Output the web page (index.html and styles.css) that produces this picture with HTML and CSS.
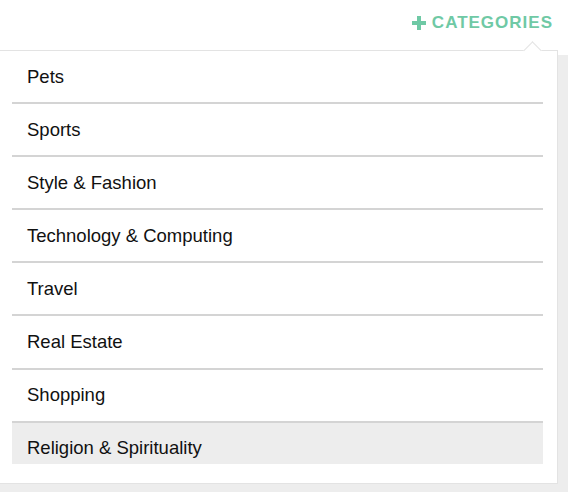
FILE: index.html
```html
<!DOCTYPE html>
<html>
<head>
<meta charset="utf-8">
<link rel="stylesheet" href="styles.css">
</head>
<body>
<div class="page">
  <header class="topbar">
    <button class="cat-btn">
      <svg class="plus" width="14" height="14" viewBox="0 0 14 14"><path d="M7 0v14M0 7h14" stroke="currentColor" stroke-width="4" fill="none"/></svg>
      <span>CATEGORIES</span>
    </button>
  </header>
  <main class="content"></main>
  <div class="dropdown">
    <span class="caret"></span>
    <ul class="list">
      <li class="item">Pets</li>
      <li class="item">Sports</li>
      <li class="item">Style &amp; Fashion</li>
      <li class="item">Technology &amp; Computing</li>
      <li class="item">Travel</li>
      <li class="item">Real Estate</li>
      <li class="item">Shopping</li>
      <li class="item active">Religion &amp; Spirituality</li>
    </ul>
  </div>
</div>
</body>
</html>
```

FILE: styles.css
```css
* { box-sizing: border-box; }
html, body { margin: 0; padding: 0; }
body {
  width: 568px;
  height: 492px;
  overflow: hidden;
  font-family: "Liberation Sans", Arial, Helvetica, sans-serif;
  background: #ffffff;
}
.page {
  position: relative;
  height: 492px;
  display: flex;
  flex-direction: column;
}
.topbar {
  height: 55px;
  display: flex;
  justify-content: flex-end;
  align-items: flex-start;
  padding: 13px 16px 0 0;
  background: #fff;
}
.cat-btn {
  display: flex;
  align-items: center;
  gap: 6px;
  border: 0;
  background: none;
  padding: 0;
  color: #6fc9a5;
  font-family: "Liberation Sans", Arial, sans-serif;
  font-weight: bold;
  font-size: 17px;
  line-height: 19px;
  letter-spacing: 1px;
}
.cat-btn span { margin-right: -1px; }
.plus { display: block; margin-top: 0; }
.content {
  flex: 1;
  background: #ededed;
}
.dropdown {
  position: absolute;
  top: 50px;
  left: -1px;
  width: 559px;
  background: #fff;
  border: 1px solid #e3e3e3;
  padding: 0 14px 19px 12px;
}
.caret {
  position: absolute;
  top: -7px;
  left: 526px;
  width: 13px;
  height: 13px;
  background: #fff;
  border-top: 1px solid #e3e3e3;
  border-left: 1px solid #e3e3e3;
  transform: rotate(45deg);
}
.list {
  list-style: none;
  margin: 0;
  padding: 0;
  height: 413px;
  overflow: hidden;
}
.item {
  height: 53.1px;
  display: flex;
  align-items: center;
  padding: 0 0 0 15px;
  border-bottom: 2px solid #d4d4d4;
  font-size: 18.5px;
  color: #111;
}
.item.active {
  background: #ededed;
}
```
